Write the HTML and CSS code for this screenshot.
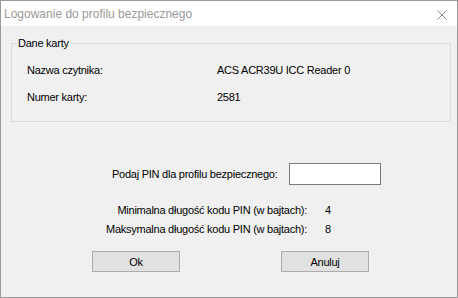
FILE: index.html
```html
<!DOCTYPE html>
<html>
<head>
    <title>Logowanie do profilu bezpiecznego</title>
    <link rel="stylesheet" href="styles.css">
</head>
<body>
    <div class="window">
        <div class="titlebar">
            <span class="title">Logowanie do profilu bezpiecznego</span>
            <svg class="close" width="10" height="10" viewBox="0 0 10 10">
                <path d="M0.5 0.5 L9.5 9.5 M9.5 0.5 L0.5 9.5" stroke="#8a8a8a" stroke-width="1" fill="none"/>
            </svg>
        </div>
        <div class="content">
            <fieldset class="group">
                <legend>Dane karty</legend>
                <div class="card-info">
                    <span>Nazwa czytnika:</span>
                    <span>ACS ACR39U ICC Reader 0</span>
                    <span>Numer karty:</span>
                    <span>2581</span>
                </div>
            </fieldset>
            <div class="pin-row">
                <label for="pin">Podaj PIN dla profilu bezpiecznego:</label>
                <input type="password" id="pin">
            </div>
            <div class="limits">
                <span class="limit-label">Minimalna długość kodu PIN (w bajtach):</span>
                <span>4</span>
                <span class="limit-label">Maksymalna długość kodu PIN (w bajtach):</span>
                <span>8</span>
            </div>
            <div class="buttons">
                <button type="submit">Ok</button>
                <button type="button">Anuluj</button>
            </div>
        </div>
    </div>
</body>
</html>
```
FILE: styles.css
```css
html, body {
    margin: 0;
    padding: 0;
}
body {
    font-family: "Liberation Sans", Arial, sans-serif;
    font-size: 11px;
    color: #000;
    background-color: #5d6f82;
}
.window {
    width: 458px;
    height: 298px;
    box-sizing: border-box;
    border: 1px solid #9a9a9a;
    background-color: #f0f0f0;
    display: flex;
    flex-direction: column;
}
.titlebar {
    height: 25px;
    background-color: #fff;
    display: flex;
    align-items: center;
    justify-content: space-between;
    padding: 0 10px 0 3px;
}
.title {
    font-size: 12px;
    color: #999;
}
.close {
    display: block;
    margin-top: 2px;
}
.content {
    flex: 1;
    letter-spacing: -0.25px;
}
.group {
    margin: 9px 6px 0 10px;
    padding: 0 0 16px 0;
    border: 1px solid #dcdcdc;
    min-width: 0;
}
.group legend {
    margin-left: 5px;
    padding: 0 1px;
    line-height: 16px;
}
.card-info {
    display: grid;
    grid-template-columns: 190px auto;
    row-gap: 11px;
    margin: 11px 0 0 15px;
    line-height: 16px;
}
.pin-row {
    display: flex;
    align-items: center;
    margin-top: 41px;
    padding-left: 111px;
}
.pin-row label {
    flex: 0 0 177px;
}
.pin-row input {
    width: 92px;
    height: 22px;
    box-sizing: border-box;
    border: 1px solid #7a7a7a;
    background-color: #fff;
    margin: 0;
    outline: none;
}
.limits {
    display: grid;
    grid-template-columns: 306px auto;
    column-gap: 18px;
    row-gap: 3px;
    margin-top: 17px;
    line-height: 16px;
}
.limit-label {
    text-align: right;
}
.buttons {
    display: flex;
    gap: 101px;
    margin-top: 14px;
    padding-left: 91px;
}
.buttons button {
    width: 88px;
    height: 21px;
    padding: 0;
    border: 1px solid #adadad;
    background-color: #e1e1e1;
    font-family: inherit;
    font-size: 11px;
    letter-spacing: -0.25px;
    color: #000;
}
```
